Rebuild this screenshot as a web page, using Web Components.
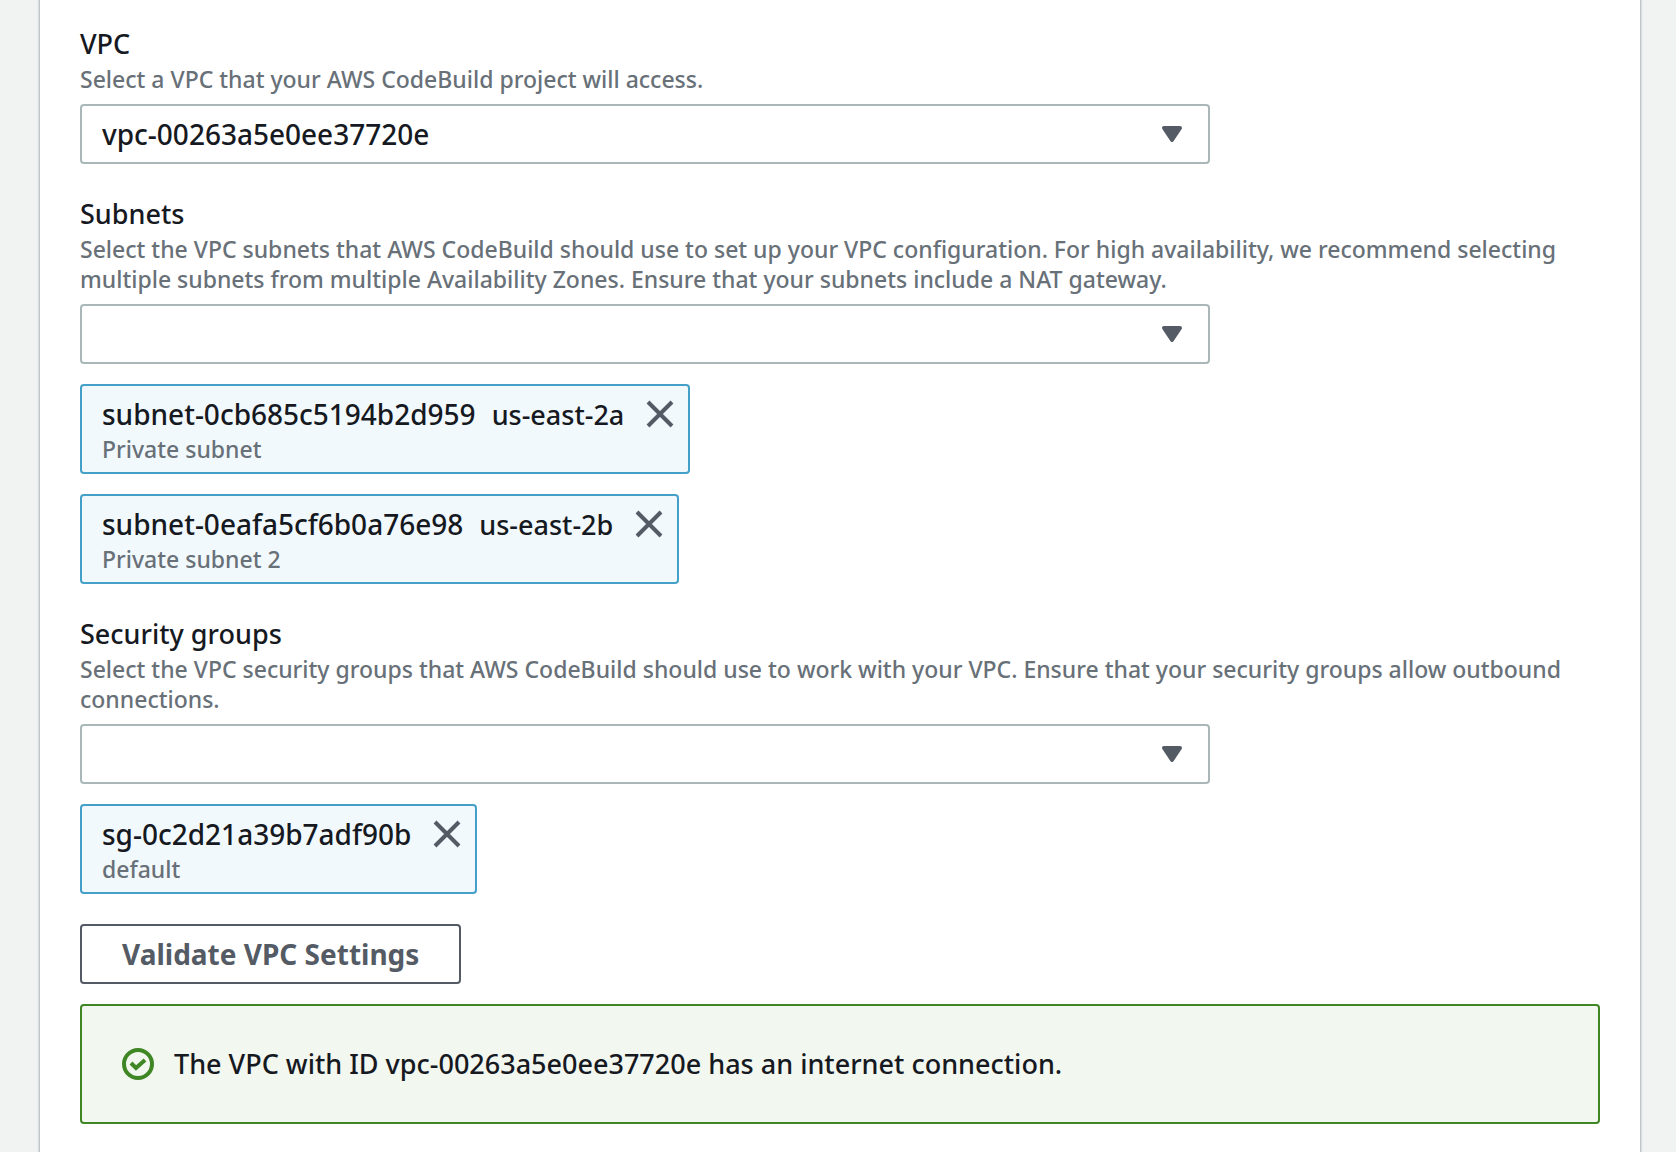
<!DOCTYPE html>
<html lang="en">
<head>
<meta charset="utf-8">
<title>VPC configuration</title>
<style>
  html { height: 100%; }
  body {
    margin: 0;
    min-height: 100%;
    display: flex;
    background: #f1f3f3;
    color: #16191f;
    font: 500 27px/40px "Noto Sans", "Open Sans", sans-serif;
  }
  settings-panel { flex: 1; }
</style>
</head>
<body>
<settings-panel>
  <select-field label="VPC" value="vpc-00263a5e0ee37720e">Select a VPC that your AWS CodeBuild project will access.</select-field>

  <select-field label="Subnets">
    Select the VPC subnets that AWS CodeBuild should use to set up your VPC configuration. For high availability, we recommend selecting multiple subnets from multiple Availability Zones. Ensure that your subnets include a NAT gateway.
    <selected-token slot="tokens" name="subnet-0cb685c5194b2d959" tag="us-east-2a">Private subnet</selected-token>
    <selected-token slot="tokens" name="subnet-0eafa5cf6b0a76e98" tag="us-east-2b">Private subnet 2</selected-token>
  </select-field>

  <select-field label="Security groups">
    Select the VPC security groups that AWS CodeBuild should use to work with your VPC. Ensure that your security groups allow outbound connections.
    <selected-token slot="tokens" name="sg-0c2d21a39b7adf90b">default</selected-token>
  </select-field>

  <validation-block slot="footer">
    <action-button>Validate VPC Settings</action-button>
    <success-alert>The VPC with ID vpc-00263a5e0ee37720e has an internet connection.</success-alert>
  </validation-block>
</settings-panel>

<script>
const define = (name, markup, setup) => {
  const template = document.createElement('template');
  template.innerHTML = markup;
  customElements.define(name, class extends HTMLElement {
    constructor() {
      super();
      this.attachShadow({ mode: 'open' }).append(template.content.cloneNode(true));
    }
    connectedCallback() {
      if (setup) setup(this, this.shadowRoot);
    }
  });
};

define('settings-panel', `
  <style>
    :host { display: block; box-sizing: border-box; padding: 0 36px 0 40px; }
    main {
      display: flex; flex-direction: column; gap: 30px;
      box-sizing: border-box; min-height: 100%;
      padding: 24px 40px 28px;
      background: #fff;
      box-shadow: 0 0 2px 1px rgba(0, 28, 36, .3);
    }
  </style>
  <main><slot></slot><slot name="footer"></slot></main>
`);

define('select-field', `
  <style>
    :host { display: block; }
    label { display: block; font-size: 27px; line-height: 40px; }
    p { margin: 0 0 10px; color: #687078; font-size: 23px; line-height: 30px; }
    .control { display: grid; width: calc(75% - 10px); align-items: center; }
    select, svg { grid-area: 1 / 1; }
    select {
      appearance: none; box-sizing: border-box; width: 100%; height: 60px; margin: 0;
      padding: 0 60px 0 20px;
      border: 2px solid #aab7b8; border-radius: 4px;
      background: #fff; color: inherit; font: inherit; font-size: 28px;
    }
    svg { justify-self: end; width: 32px; height: 32px; margin-right: 22px; pointer-events: none; }
    .tokens { display: flex; flex-direction: column; align-items: flex-start; gap: 20px; }
    .tokens.filled { margin-top: 20px; }
  </style>
  <label for="choice"></label>
  <p id="hint"><slot></slot></p>
  <div class="control">
    <select id="choice" aria-describedby="hint"><option></option></select>
    <svg viewBox="0 0 16 16" aria-hidden="true"><path d="M4 5h8l-4 6z" fill="#545b64" stroke="#545b64" stroke-width="2" stroke-linejoin="round"/></svg>
  </div>
  <div class="tokens"><slot name="tokens"></slot></div>
`, (host, root) => {
  root.querySelector('label').textContent = host.getAttribute('label');
  root.querySelector('option').textContent = host.getAttribute('value') || '';
  const tokens = root.querySelector('.tokens');
  const tokenSlot = root.querySelector('slot[name=tokens]');
  const update = () => tokens.classList.toggle('filled', tokenSlot.assignedElements().length > 0);
  tokenSlot.addEventListener('slotchange', update);
  update();
});

define('selected-token', `
  <style>
    :host {
      display: flex; align-items: flex-start; gap: 20px;
      padding: 8px 12px 8px 20px;
      border: 2px solid #44a0c8; border-radius: 4px;
      background: #f2f9fd;
    }
    .title { display: flex; align-items: baseline; gap: 16px; font-size: 28px; line-height: 40px; height: 40px; }
    #tag { font-size: 27px; }
    .detail { color: #687078; font-size: 23px; line-height: 30px; }
    button { display: flex; margin: 0; padding: 4px 0; border: 0; background: none; cursor: pointer; }
    svg { width: 32px; height: 32px; }
  </style>
  <div>
    <div class="title"><span id="name"></span></div>
    <div class="detail"><slot></slot></div>
  </div>
  <button type="button"><svg viewBox="0 0 16 16" aria-hidden="true"><path d="M2 2l12 12M14 2L2 14" fill="none" stroke="#545b64" stroke-width="2"/></svg></button>
`, (host, root) => {
  const name = host.getAttribute('name');
  root.querySelector('#name').textContent = name;
  root.querySelector('button').setAttribute('aria-label', 'Remove ' + name);
  if (host.hasAttribute('tag') && !root.querySelector('#tag')) {
    const tag = document.createElement('span');
    tag.id = 'tag';
    tag.textContent = host.getAttribute('tag');
    root.querySelector('.title').append(tag);
  }
});

define('validation-block', `
  <style>
    :host { display: flex; flex-direction: column; align-items: stretch; gap: 20px; }
  </style>
  <slot></slot>
`);

define('action-button', `
  <style>
    :host { display: flex; }
    button {
      margin: 0; padding: 8px 40px; border: 2px solid #545b64; border-radius: 4px;
      background: #fff; color: #545b64; font: inherit; font-size: 28px; line-height: 40px; font-weight: 700; cursor: pointer;
    }
  </style>
  <button type="button"><slot></slot></button>
`);

define('success-alert', `
  <style>
    :host {
      display: flex; align-items: center; gap: 20px;
      padding: 38px 40px;
      border: 2px solid #3f8624; border-radius: 4px; background: #f2f7f0;
    }
    svg { flex: none; width: 32px; height: 32px; }
  </style>
  <svg viewBox="0 0 32 32" fill="none" stroke="#3f8624" stroke-width="4" aria-hidden="true"><circle cx="16" cy="16" r="14"/><path d="M9 15l5 5 9-8"/></svg>
  <div role="status"><slot></slot></div>
`);
</script>
</body>
</html>
